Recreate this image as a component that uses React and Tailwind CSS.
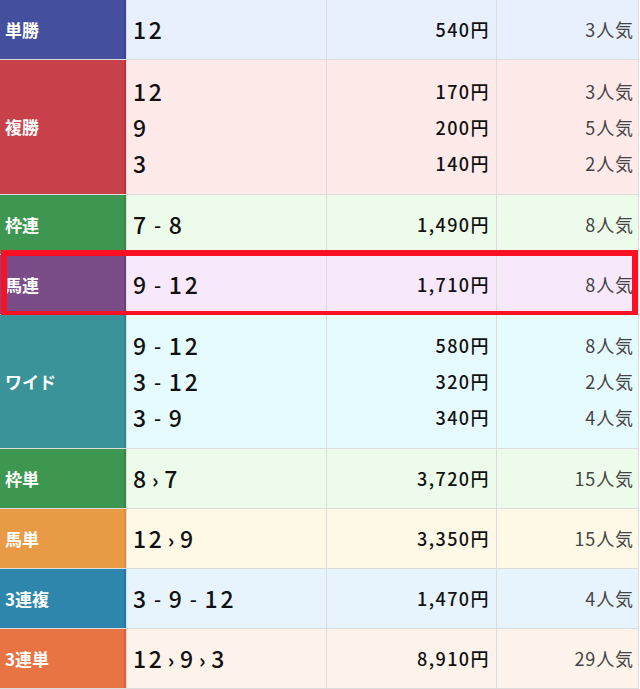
import React from 'react'

const rows = [
  { label: '単勝', labelBg: 'bg-[#444f9e]', edge: 'border-[#3a4492]', bg: 'bg-[#e8f0fd]', h: 'h-[60px]', items: [{ n: ['12'], pay: '540円', pop: '3人気' }] },
  {
    label: '複勝', labelBg: 'bg-[#c8414a]', edge: 'border-[#c0303a]', bg: 'bg-[#ffeaea]', h: 'h-[135px]',
    items: [
      { n: ['12'], pay: '170円', pop: '3人気' },
      { n: ['9'], pay: '200円', pop: '5人気' },
      { n: ['3'], pay: '140円', pop: '2人気' },
    ],
  },
  { label: '枠連', labelBg: 'bg-[#3e9750]', edge: 'border-[#348a45]', bg: 'bg-[#edfcea]', h: 'h-[60px]', items: [{ n: ['7', '-', '8'], pay: '1,490円', pop: '8人気' }] },
  { label: '馬連', labelBg: 'bg-[#7a4d89]', edge: 'border-[#6d4080]', bg: 'bg-[#f8e8fc]', h: 'h-[60px]', items: [{ n: ['9', '-', '12'], pay: '1,710円', pop: '8人気' }], marked: true },
  {
    label: 'ワイド', labelBg: 'bg-[#3a9398]', edge: 'border-[#2f878c]', bg: 'bg-[#e6fbfe]', h: 'h-[134px]',
    items: [
      { n: ['9', '-', '12'], pay: '580円', pop: '8人気' },
      { n: ['3', '-', '12'], pay: '320円', pop: '2人気' },
      { n: ['3', '-', '9'], pay: '340円', pop: '4人気' },
    ],
  },
  { label: '枠単', labelBg: 'bg-[#3e9750]', edge: 'border-[#348a45]', bg: 'bg-[#edfcea]', h: 'h-[60px]', items: [{ n: ['8', '>', '7'], pay: '3,720円', pop: '15人気' }] },
  { label: '馬単', labelBg: 'bg-[#e99a44]', edge: 'border-[#de8c35]', bg: 'bg-[#fef9e7]', h: 'h-[60px]', items: [{ n: ['12', '>', '9'], pay: '3,350円', pop: '15人気' }] },
  { label: '3連複', labelBg: 'bg-[#2f86ad]', edge: 'border-[#1f7aa3]', bg: 'bg-[#e7f4fd]', h: 'h-[60px]', items: [{ n: ['3', '-', '9', '-', '12'], pay: '1,470円', pop: '4人気' }] },
  { label: '3連単', labelBg: 'bg-[#e87343]', edge: 'border-[#dd6535]', bg: 'bg-[#fdf3ea]', h: 'h-[60px]', items: [{ n: ['12', '>', '9', '>', '3'], pay: '8,910円', pop: '29人気' }] },
]

const Combo = ({ parts }) => (
  <span className="flex items-center">
    {parts.map((p, i) => {
      if (p === '-') return <span key={i} className="mx-[5px] text-[20px]">-</span>
      if (p === '>') return <span key={i} className="mx-[3px] text-[20px] font-bold mt-[3px]">›</span>
      return <span key={i}>{p}</span>
    })}
  </span>
)

const ResultRow = ({ row }) => (
  <div className={`relative flex ${row.h} border-b border-[#dcdcdc]`}>
    <div className={`w-[126px] flex items-center pl-[5px] ${row.labelBg} border-r-2 ${row.edge} text-white font-bold text-[17px]`}>
      {row.label}
    </div>
    <div className={`flex flex-1 ${row.bg}`}>
      <div className="w-[201px] border-l border-r border-[#dcdcdc] flex flex-col justify-center pl-[6px] text-[23px] font-medium text-[#111] tracking-[0.12em]">
        {row.items.map((it, i) => (
          <div key={i} className="h-[36px] flex items-center"><Combo parts={it.n} /></div>
        ))}
      </div>
      <div className="w-[170px] border-r border-[#dcdcdc] flex flex-col justify-center pr-[6px] text-[18px] font-medium text-[#111] tracking-[0.08em]">
        {row.items.map((it, i) => (
          <div key={i} className="h-[36px] flex items-center justify-end">{it.pay}</div>
        ))}
      </div>
      <div className="flex-1 border-r border-[#dcdcdc] flex flex-col justify-center pr-[4px] text-[18px] text-[#444] tracking-[0.05em]">
        {row.items.map((it, i) => (
          <div key={i} className="h-[36px] flex items-center justify-end">{it.pop}</div>
        ))}
      </div>
    </div>
    {row.marked && (
      <div className="absolute left-[1px] -top-[5px] w-[637px] h-[67px] border-[6px] border-[#fb1024] pointer-events-none" />
    )}
  </div>
)

export default function App() {
  return (
    <div className="w-[639px] bg-white font-['Noto_Sans_CJK_JP',sans-serif]">
      {rows.map((row) => (
        <ResultRow key={row.label} row={row} />
      ))}
    </div>
  )
}
